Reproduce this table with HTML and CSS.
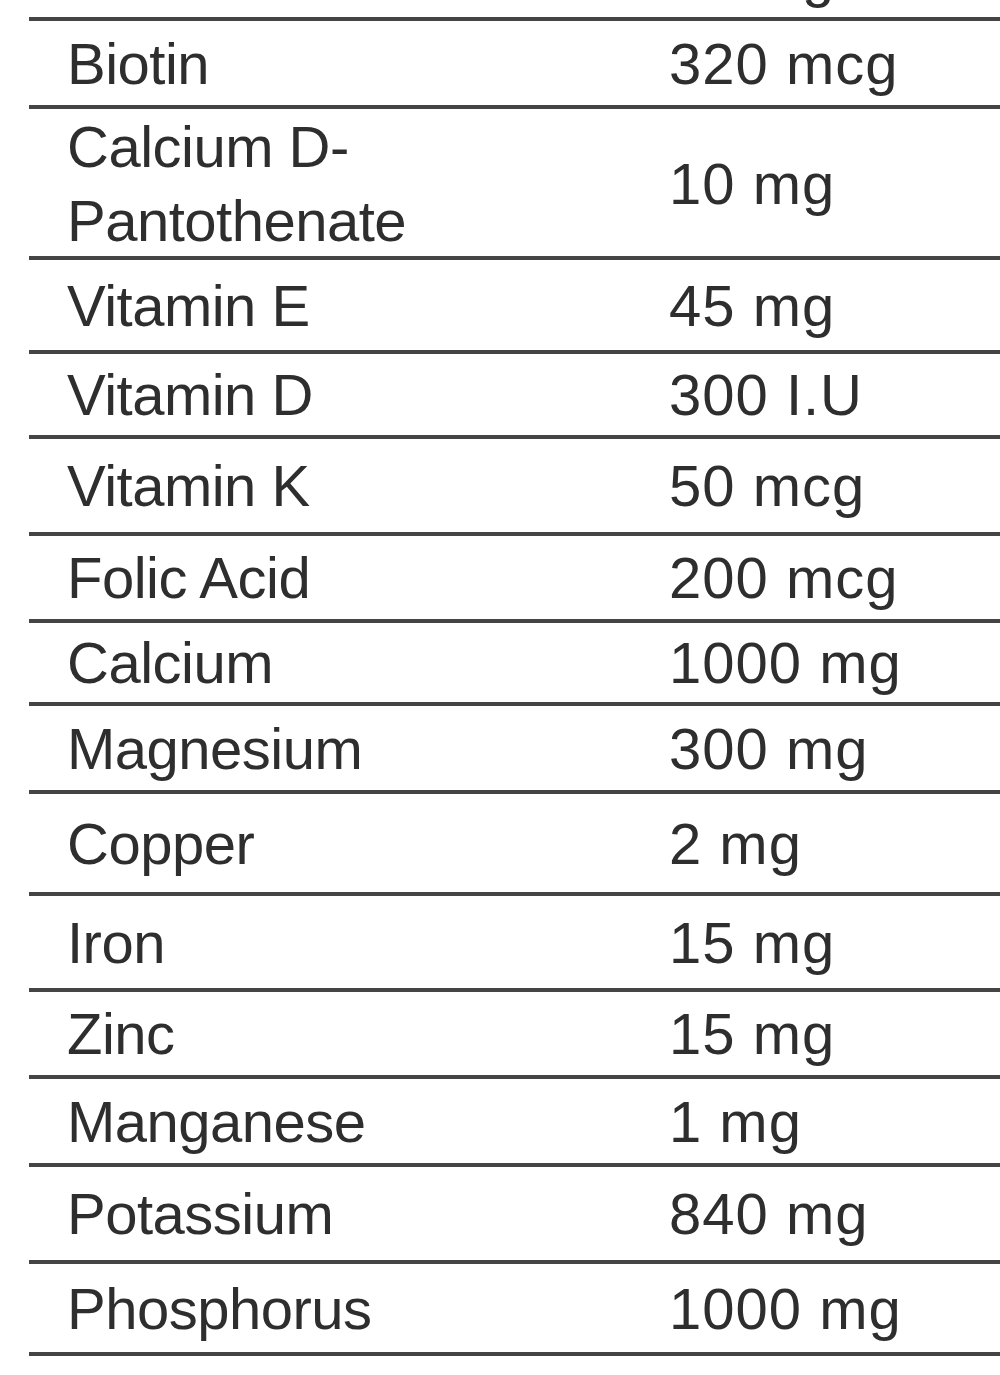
FILE: index.html
```html
<!DOCTYPE html>
<html lang="en">
<head>
<meta charset="utf-8">
<title>Composition</title>
<link rel="stylesheet" href="styles.css">
</head>
<body>
<div class="table">
  <div class="row"><div class="name">Niacinamide</div><div class="value">20 mg</div></div>
  <div class="row"><div class="name">Biotin</div><div class="value">320 mcg</div></div>
  <div class="row"><div class="name">Calcium D-Pantothenate</div><div class="value">10 mg</div></div>
  <div class="row"><div class="name">Vitamin E</div><div class="value">45 mg</div></div>
  <div class="row"><div class="name">Vitamin D</div><div class="value">300 I.U</div></div>
  <div class="row"><div class="name">Vitamin K</div><div class="value">50 mcg</div></div>
  <div class="row"><div class="name">Folic Acid</div><div class="value">200 mcg</div></div>
  <div class="row"><div class="name">Calcium</div><div class="value">1000 mg</div></div>
  <div class="row"><div class="name">Magnesium</div><div class="value">300 mg</div></div>
  <div class="row"><div class="name">Copper</div><div class="value">2 mg</div></div>
  <div class="row"><div class="name">Iron</div><div class="value">15 mg</div></div>
  <div class="row"><div class="name">Zinc</div><div class="value">15 mg</div></div>
  <div class="row"><div class="name">Manganese</div><div class="value">1 mg</div></div>
  <div class="row"><div class="name">Potassium</div><div class="value">840 mg</div></div>
  <div class="row"><div class="name">Phosphorus</div><div class="value">1000 mg</div></div>
  <div class="row"><div class="name">Iodine</div><div class="value">150 mcg</div></div>
</div>
</body>
</html>
```

FILE: styles.css
```css
html, body {
  margin: 0;
  padding: 0;
  background: #ffffff;
}

body {
  overflow: hidden;
  font-family: "Liberation Sans", Arial, sans-serif;
  color: #2e2e2e;
}

.table {
  margin-left: 29px;
  margin-top: -67px;
}

.row {
  box-sizing: border-box;
  display: grid;
  grid-template-columns: 640px 1fr;
  align-items: center;
  border-bottom: 4px solid #444444;
  font-size: 58px;
  line-height: 74px;
  letter-spacing: -0.5px;
  padding-top: 1px;
}

.name {
  padding-left: 38px;
  max-width: 380px;
}

.value {
  white-space: nowrap;
  letter-spacing: 1px;
}

.row:nth-child(1)  { height: 88px; }
.row:nth-child(2)  { height: 88px; }
.row:nth-child(3)  { height: 151px; }
.row:nth-child(4)  { height: 94px; }
.row:nth-child(5)  { height: 85px; }
.row:nth-child(6)  { height: 97px; }
.row:nth-child(7)  { height: 87px; }
.row:nth-child(8)  { height: 83px; }
.row:nth-child(9)  { height: 88px; }
.row:nth-child(10) { height: 102px; }
.row:nth-child(11) { height: 96px; }
.row:nth-child(12) { height: 87px; }
.row:nth-child(13) { height: 88px; }
.row:nth-child(14) { height: 97px; }
.row:nth-child(15) { height: 92px; }
.row:nth-child(16) { height: 92px; }
```
